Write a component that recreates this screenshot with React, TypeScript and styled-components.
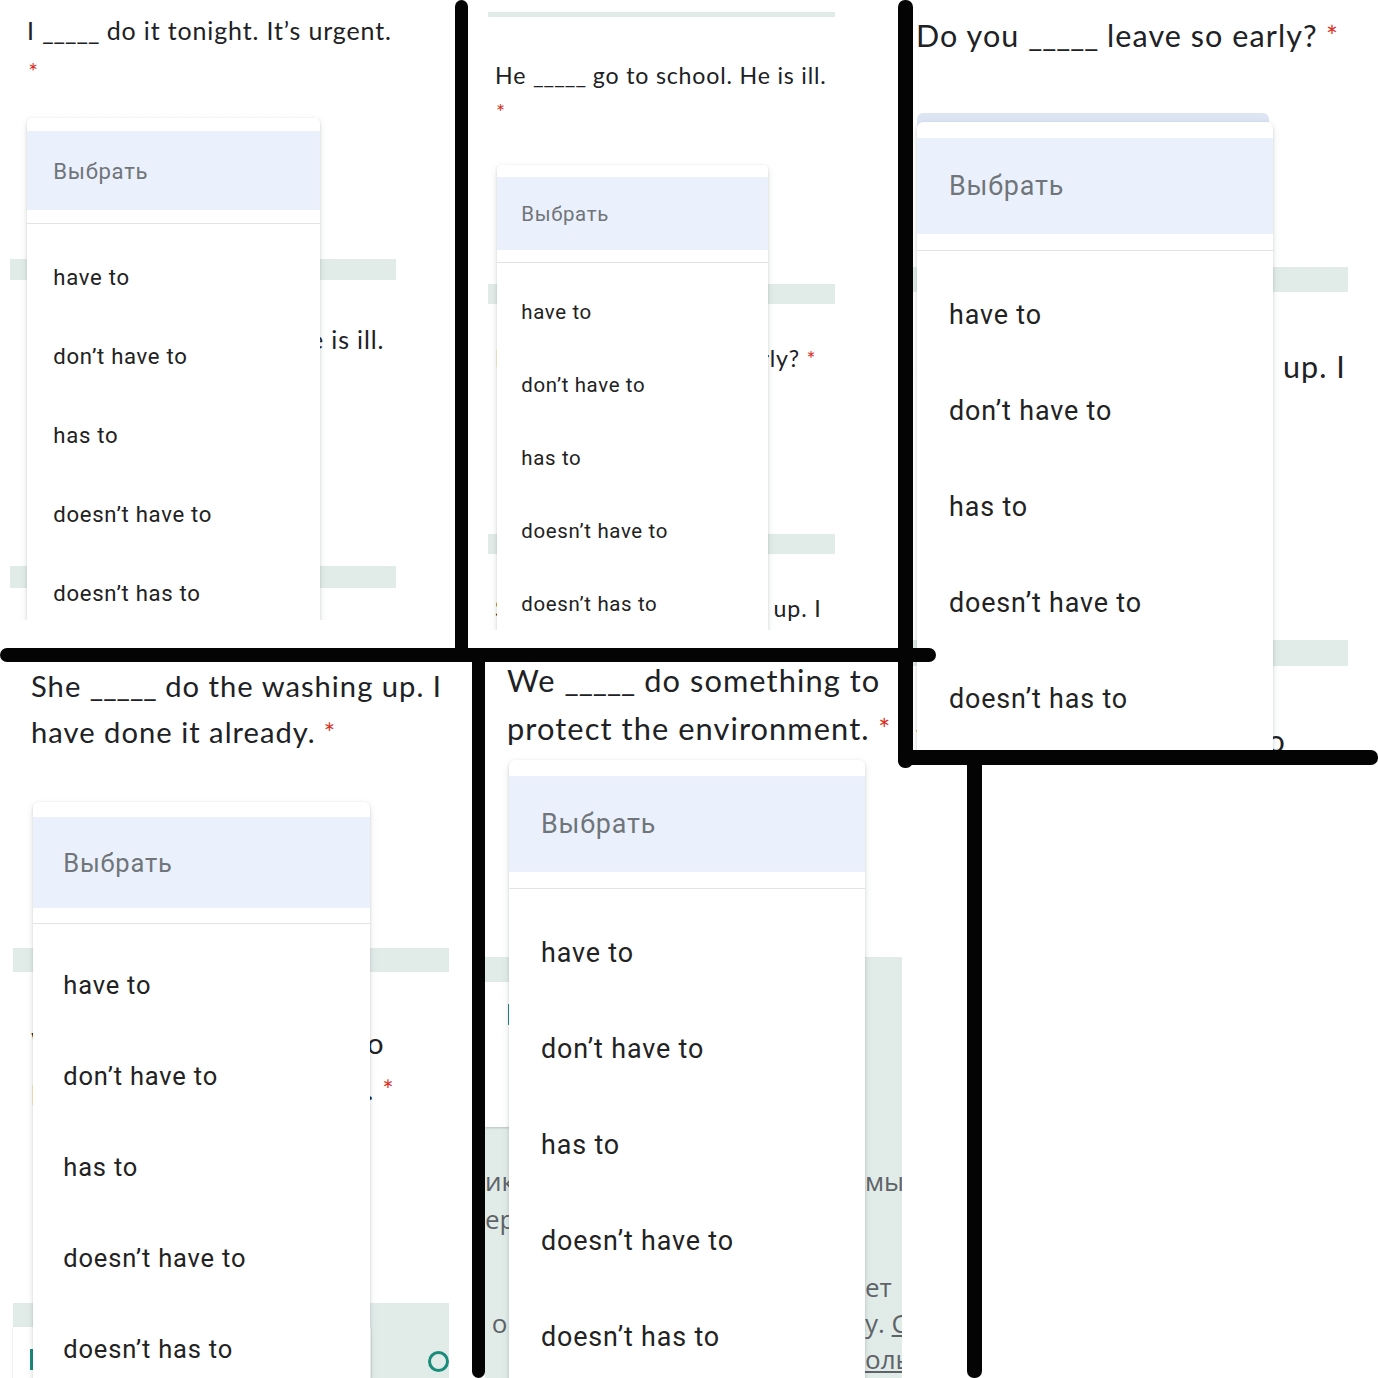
import React from 'react';
import styled, { createGlobalStyle } from 'styled-components';

const Global = createGlobalStyle`
  html, body { margin: 0; padding: 0; background: #ffffff; }
  body { width: 1378px; height: 1378px; overflow: hidden; font-family: Roboto, "Liberation Sans", Arial, sans-serif; }
  #root { width: 1378px; height: 1378px; }
`;

const OPTIONS = ['have to', 'don’t have to', 'has to', 'doesn’t have to', 'doesn’t has to'];

/* ---------- collage canvas ---------- */
const Canvas = styled.div`
  position: relative;
  width: 1378px;
  height: 1378px;
  background: #ffffff;
  overflow: hidden;
`;

const Shot = styled.section<{ $x: number; $y: number; $w: number; $h: number }>`
  position: absolute;
  left: ${p => p.$x}px;
  top: ${p => p.$y}px;
  width: ${p => p.$w}px;
  height: ${p => p.$h}px;
  overflow: hidden;
  background: #ffffff;
`;

const Stroke = styled.div<{ $x: number; $y: number; $w: number; $h: number }>`
  position: absolute;
  left: ${p => p.$x}px;
  top: ${p => p.$y}px;
  width: ${p => p.$w}px;
  height: ${p => p.$h}px;
  background: #040404;
  border-radius: 7px;
`;

/* ---------- form backdrop ---------- */
const Form = styled.div<{ $left: number; $width: number; $top: number; $fill?: boolean; $clip?: boolean }>`
  display: flex;
  flex-direction: column;
  margin-left: ${p => p.$left}px;
  width: ${p => p.$width}px;
  padding-top: ${p => p.$top}px;
  height: ${p => (p.$fill ? '100%' : 'auto')};
  box-sizing: border-box;
  overflow: ${p => (p.$clip ? 'hidden' : 'visible')};
`;

const Title = styled.div<{ $s: number; $fs: number; $mt: number; $indent: number }>`
  margin-top: ${p => p.$mt}px;
  padding-left: ${p => p.$indent}px;
  font-family: Lato, "Open Sans", "Liberation Sans", sans-serif;
  font-size: ${p => 30 * p.$fs}px;
  line-height: ${p => 48 * p.$s}px;
  letter-spacing: 0.035em;
  color: #202124;
  white-space: nowrap;
  flex: none;
`;

const TitleLine = styled.div`
  height: 1lh;
`;

const Blank = styled.span`
  letter-spacing: 0;
`;

const Req = styled.span<{ $solo: boolean }>`
  color: #d93025;
  margin-left: ${p => (p.$solo ? '0.05em' : '0.3em')};
  font-size: 0.92em;
`;

const Band = styled.div<{ $mt: number; $h: number }>`
  margin-top: ${p => p.$mt}px;
  height: ${p => p.$h}px;
  background: #e1ece9;
  flex: none;
`;

const SelectField = styled.div<{ $mt: number; $indent: number; $w: number; $h: number }>`
  margin-top: ${p => p.$mt}px;
  margin-left: ${p => p.$indent}px;
  width: ${p => p.$w}px;
  height: ${p => p.$h}px;
  background: #dde5f5;
  border-radius: 6px;
  flex: none;
`;

const ThemeArea = styled.div<{ $mt: number }>`
  margin-top: ${p => p.$mt}px;
  flex: 1;
  background: #e1ece9;
  display: flex;
  flex-direction: column;
`;

const ThemeRow = styled.div`
  display: flex;
  flex: 1;
`;

const InnerCard = styled.div<{ $mt: number; $w: number; $h?: number }>`
  margin-top: ${p => p.$mt}px;
  width: ${p => p.$w}px;
  height: ${p => (p.$h ? `${p.$h}px` : 'auto')};
  flex: ${p => (p.$h ? 'none' : '1')};
  background: #ffffff;
  box-shadow: 0 1px 2px rgba(60, 64, 67, 0.25);
  display: flex;
  align-items: flex-start;
`;

const AccentMark = styled.div<{ $mt: number; $ml: number }>`
  margin-top: ${p => p.$mt}px;
  margin-left: ${p => p.$ml}px;
  width: 4px;
  height: 21px;
  background: #1a8c7b;
`;

const RadioSpot = styled.div<{ $mt: number; $ml: number }>`
  margin-top: ${p => p.$mt}px;
  margin-left: ${p => p.$ml}px;
  width: 15px;
  height: 15px;
  border: 3px solid #1a8c7b;
  border-radius: 50%;
`;

const FooterRow = styled.div<{ $mt: number }>`
  margin-top: ${p => p.$mt}px;
  display: flex;
  justify-content: space-between;
  height: 36px;
  line-height: 36px;
  font-family: "Open Sans", "Noto Sans", sans-serif;
  font-size: 26px;
  color: #5f6368;
  white-space: nowrap;
  overflow: hidden;
`;

const FootLeft = styled.span`
  width: 25px;
  overflow: hidden;
  flex: none;
`;

const FootRight = styled.span<{ $u?: boolean }>`
  width: 37px;
  margin-left: auto;
  overflow: hidden;
  flex: none;
  text-decoration: ${p => (p.$u ? 'underline' : 'none')};
`;

const Link = styled.span`
  text-decoration: underline;
`;

/* ---------- dropdown menu (overlay) ---------- */
const Menu = styled.div<{ $s: number; $x: number; $y: number }>`
  position: absolute;
  left: ${p => p.$x}px;
  top: ${p => p.$y}px;
  width: ${p => 356 * p.$s}px;
  padding-top: ${p => 16 * p.$s}px;
  padding-bottom: ${p => 40 * p.$s}px;
  background: #ffffff;
  border-radius: ${p => 6 * p.$s}px ${p => 6 * p.$s}px 0 0;
  box-shadow: 0 1px 3px rgba(60, 64, 67, 0.2), 0 3px 9px rgba(60, 64, 67, 0.1);
  font-family: Roboto, "Liberation Sans", sans-serif;
  font-size: ${p => 26.9 * p.$s}px;
  letter-spacing: ${p => 0.85 * p.$s}px;
`;

const Placeholder = styled.div<{ $s: number }>`
  height: ${p => 96 * p.$s}px;
  display: flex;
  align-items: center;
  padding-left: ${p => 32 * p.$s}px;
  background: #ebf1fc;
  color: #70757a;
`;

const OptionList = styled.div<{ $s: number }>`
  margin-top: ${p => 16 * p.$s}px;
  padding-top: ${p => 16 * p.$s}px;
  border-top: 1px solid #e3e3e3;
  display: flex;
  flex-direction: column;
`;

const Option = styled.div<{ $s: number }>`
  height: ${p => 96 * p.$s}px;
  display: flex;
  align-items: center;
  padding-left: ${p => 32 * p.$s}px;
  color: #222222;
`;

function Dropdown({ s, x, y }: { s: number; x: number; y: number }) {
  return (
    <Menu $s={s} $x={x} $y={y}>
      <Placeholder $s={s}>Выбрать</Placeholder>
      <OptionList $s={s}>
        {OPTIONS.map(o => (
          <Option key={o} $s={s}>
            {o}
          </Option>
        ))}
      </OptionList>
    </Menu>
  );
}

function renderText(line: string) {
  const parts = line.split('_____');
  return parts.map((part, i) => (
    <React.Fragment key={i}>
      {part}
      {i < parts.length - 1 && <Blank>_____</Blank>}
    </React.Fragment>
  ));
}

function Question({
  s,
  fs,
  lines,
  mt,
  indent,
}: {
  s: number;
  fs: number;
  lines: string[];
  mt: number;
  indent: number;
}) {
  return (
    <Title $s={s} $fs={fs} $mt={mt} $indent={indent}>
      {lines.map((l, i) => (
        <TitleLine key={i}>
          {renderText(l)}
          {i === lines.length - 1 && <Req $solo={l === ''}>*</Req>}
        </TitleLine>
      ))}
    </Title>
  );
}

const Q1 = 'I _____ do it tonight. It’s urgent.';
const Q2 = 'He _____ go to school. He is ill.';
const Q3 = 'Do you _____ leave so early?';
const Q4a = 'She _____ do the washing up. I';
const Q4b = 'have done it already.';
const Q5a = 'We _____ do something to';
const Q5b = 'protect the environment.';

export default function App() {
  return (
    <>
      <Global />
      <Canvas>
        {/* Panel A */}
        <Shot $x={0} $y={0} $w={455} $h={620}>
          <Form $left={10} $width={386} $top={0}>
            <Question s={0.823} fs={0.832} lines={[Q1, '']} mt={11} indent={17} />
            <Band $mt={169} $h={21} />
            <Question s={0.823} fs={0.832} lines={[Q2, '']} mt={40} indent={17} />
            <Band $mt={167} $h={22} />
          </Form>
          <Dropdown s={0.823} x={27} y={118} />
        </Shot>

        {/* Panel B */}
        <Shot $x={468} $y={0} $w={430} $h={630}>
          <Form $left={20} $width={347} $top={12}>
            <Band $mt={0} $h={5} />
            <Question s={0.76} fs={0.772} lines={[Q2, '']} mt={40} indent={7} />
            <Band $mt={154} $h={20} />
            <Question s={0.76} fs={0.772} lines={[Q3]} mt={36} indent={7} />
            <Band $mt={158} $h={20} />
            <Question s={0.76} fs={0.772} lines={[Q4a, Q4b]} mt={36} indent={7} />
          </Form>
          <Dropdown s={0.76} x={29} y={165} />
        </Shot>

        {/* Panel E */}
        <Shot $x={485} $y={662} $w={482} $h={716}>
          <Form $left={0} $width={417} $top={0} $fill $clip>
            <Question s={1} fs={1.027} lines={[Q5a, Q5b]} mt={-5} indent={22} />
            <ThemeArea $mt={204}>
              <InnerCard $mt={25} $w={360} $h={145}>
                <AccentMark $mt={22} $ml={23} />
              </InnerCard>
              <FooterRow $mt={36}>
                <FootLeft>ик</FootLeft>
                <FootRight>мы для</FootRight>
              </FooterRow>
              <FooterRow $mt={2}>
                <FootLeft>ер</FootLeft>
              </FooterRow>
              <FooterRow $mt={32}>
                <FootRight>ет</FootRight>
              </FooterRow>
              <FooterRow $mt={0}>
                <FootLeft>&nbsp;о</FootLeft>
                <FootRight>
                  у. <Link>Сообщить</Link>
                </FootRight>
              </FooterRow>
              <FooterRow $mt={0}>
                <FootRight $u>ользования</FootRight>
              </FooterRow>
            </ThemeArea>
          </Form>
          <Dropdown s={1} x={24} y={98} />
        </Shot>

        {/* Panel D */}
        <Shot $x={0} $y={662} $w={472} $h={716}>
          <Form $left={13} $width={436} $top={0} $fill>
            <Question s={0.948} fs={0.972} lines={[Q4a, Q4b]} mt={1} indent={18} />
            <Band $mt={194} $h={24} />
            <Question s={0.948} fs={0.972} lines={[Q5a, Q5b]} mt={48} indent={18} />
            <ThemeArea $mt={192}>
              <ThemeRow>
                <InnerCard $mt={24} $w={358}>
                  <AccentMark $mt={22} $ml={17} />
                </InnerCard>
                <RadioSpot $mt={48} $ml={57} />
              </ThemeRow>
            </ThemeArea>
          </Form>
          <Dropdown s={0.948} x={33} y={140} />
        </Shot>

        {/* Panel C */}
        <Shot $x={913} $y={0} $w={465} $h={750}>
          <Form $left={0} $width={435} $top={0} $clip>
            <Question s={1} fs={1.017} lines={[Q3]} mt={11} indent={3} />
            <SelectField $mt={54} $indent={4} $w={352} $h={40} />
            <Band $mt={114} $h={25} />
            <Question s={1} fs={1.017} lines={[Q4a, Q4b]} mt={50} indent={3} />
            <Band $mt={202} $h={26} />
            <Question s={1} fs={1.017} lines={[Q5a, Q5b]} mt={50} indent={3} />
          </Form>
          <Dropdown s={1} x={4} y={122} />
        </Shot>

        {/* hand-drawn dividers */}
        <Stroke $x={455} $y={0} $w={13} $h={656} />
        <Stroke $x={0} $y={648} $w={936} $h={14} />
        <Stroke $x={898} $y={0} $w={15} $h={768} />
        <Stroke $x={898} $y={750} $w={480} $h={15} />
        <Stroke $x={472} $y={654} $w={13} $h={724} />
        <Stroke $x={967} $y={755} $w={15} $h={623} />
      </Canvas>
    </>
  );
}
